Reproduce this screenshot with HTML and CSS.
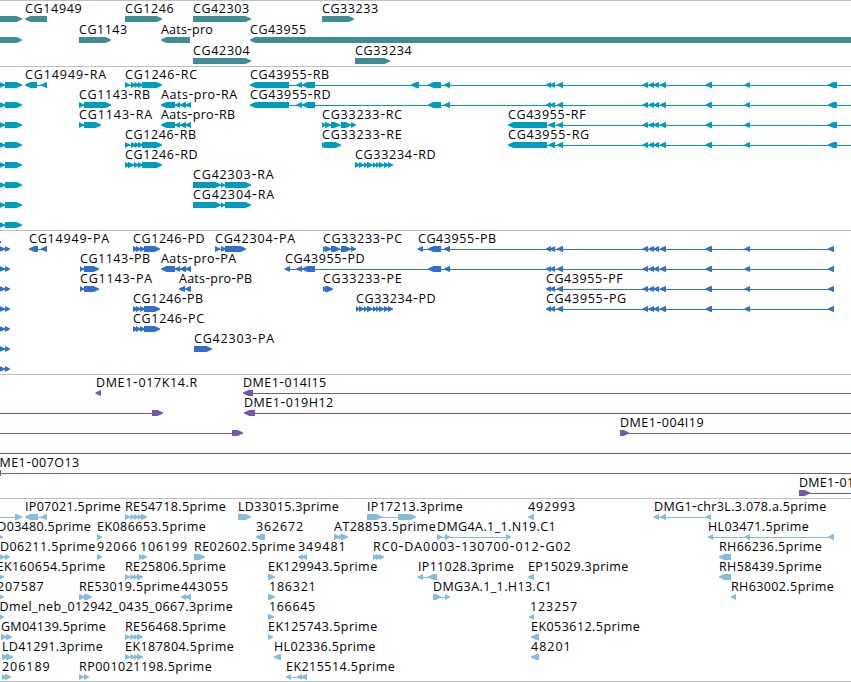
FILE: index.html
```html
<!DOCTYPE html>
<html lang="en">
<head>
<meta charset="utf-8">
<title>Genome tracks</title>
<link rel="stylesheet" href="styles.css">
</head>
<body>
<main class="browser">
<section class="track genes"></section>
<section class="track transcripts"></section>
<section class="track proteins"></section>
<section class="track clones"></section>
<section class="track ests"></section>
</main>
<script src="tracks.js"></script>
</body>
</html>
```
FILE: styles.css
```css
html,
body {
  margin: 0;
  background: #fff;
}

body {
  overflow: hidden;
}

.browser {
  display: flex;
  flex-direction: column;
  width: 851px;
  border-bottom: 1px solid #bebebe;
}

.track {
  border-top: 1px solid #bebebe;
}

.track svg {
  display: block;
  width: 851px;
}

.label {
  font-family: "Open Sans", "DejaVu Sans", sans-serif;
  font-size: 12.5px;
  fill: #000;
}

.dash {
  font-size: 15px;
}

.genes { color: #3f8c93; }
.transcripts { color: #009cbf; }
.proteins { color: #306fce; }
.clones { color: #7457a7; }
.ests { color: #87bbdc; }

.exon,
.intron {
  fill: currentColor;
}
```
FILE: tracks.js
```js
// Feature: [row, direction, "exon ranges", intron line or null, label, label start, label end]
const same = "546-551,550-555,557-563";
const tail = ",642.5-648,648.5-654,653.5-659,660-666,705.5-712,744.5-750";
const tTail = tail + ",828-837";
const pTail = tail + ",828-834";

const genes = [
  [0, ">", "-9-22"], [1, ">", "-9-22"],
  [0, "<", "25-47", null, "CG14949", 26, 81],
  [0, ">", "125-162", null, "CG1246", 126, 173],
  [0, ">", "193-251", null, "CG42303", 194, 248.5],
  [0, ">", "322-354", null, "CG33233", 323, 377.5],
  [1, ">", "79-111", null, "CG1143", 80, 126.5],
  [1, "<", "161-190", null, "Aats-pro", 162, 212],
  [1, "<", "250-870", null, "CG43955", 251, 305.5],
  [2, ">", "193-251", null, "CG42304", 194, 249],
  [2, ">", "355-390", null, "CG33234", 356, 411]
];

const transcripts = [
  [0, "<", "25-37,41-47", [30, 47], "CG14949-RA", 26, 105.5],
  [0, ">", "125-130,131-136,134.5-139.5,138-143,142-162", [125, 145], "CG1246-RC", 126, 196.5],
  [0, "<", "250-289,296.5-302,302-315,411-419,428-441,444-450," + same + tTail, [250, 851], "CG43955-RB", 251, 328.5],
  [1, ">", "79-84,84-111", [79, 90], "CG1143-RB", 80, 149.5],
  [1, "<", "161-175,175-180,180-186,185.5-191", [165, 190], "Aats-pro-RA", 162, 236.5],
  [1, "<", "250-289,296.5-302,302-315,428-441,444-450," + same + tTail, [250, 851], "CG43955-RD", 251, 330],
  [2, ">", "79-84,84-101", [79, 90], "CG1143-RA", 80, 151.5],
  [2, "<", "161-175,175-180,180-186,185.5-191", [165, 190], "Aats-pro-RB", 162, 234.5],
  [2, ">", "322-326,325-331,331-340,341-351,351-356", [322, 354], "CG33233-RC", 323, 401.5],
  [2, "<", "508-547,548.5-555,557-563" + tTail, [510, 851], "CG43955-RF", 509, 585],
  [3, ">", "125-130,131-136,134.5-139.5,138-143,142-162", [125, 145], "CG1246-RB", 126, 195.5],
  [3, ">", "322-326,324-341", null, "CG33233-RE", 323, 401],
  [3, "<", "508-547,548.5-555,557-563" + tTail, [510, 851], "CG43955-RG", 509, 588.5],
  [4, ">", "125-130,128-134,134-139,138-143,142-162", [125, 145], "CG1246-RD", 126, 197],
  [4, ">", "355-360,359-364,364-368,367-373,373-377,376-380,379-384,384-389,388-393", [355, 390], "CG33234-RD", 356, 435],
  [5, ">", "193-221,221-225,225-251", [200, 240], "CG42303-RA", 194, 273],
  [6, ">", "193-221,221-225,225-251", [200, 240], "CG42304-RA", 194, 273.5]
];
for (let r = 0; r < 8; r++) transcripts.push([r, ">", "-1-5,5-22", [0, 9]]);

const proteins = [
  [0, "<", "29-38,41-47", [30, 46], "CG14949-PA", 30, 108.5],
  [0, ">", "133-138,136-141,140-145,144-160", [133, 148], "CG1246-PD", 134, 204],
  [0, ">", "215-220,221-226,225-246", [215, 230], "CG42304-PA", 216, 294.5],
  [0, ">", "323-327,325-331,331-340,341-351,351-356", [323, 354], "CG33233-PC", 324, 401.5],
  [0, "<", "417.5-423,428-441,444-450," + same + pTail, [420, 833], "CG43955-PB", 419, 495.5],
  [1, ">", "80-84,84-99", [80, 90], "CG1143-PB", 81, 149.5],
  [1, "<", "161-175,175-180,180-186,185.5-191", [165, 190], "Aats-pro-PA", 162, 235.5],
  [1, "<", "284.5-290,296.5-302,302-315,428-441,444-450," + same + pTail, [287, 833], "CG43955-PD", 286, 364],
  [2, ">", "80-84,84-99", [80, 90], "CG1143-PA", 81, 151.5],
  [2, "<", "179-185,185-191", null, "Aats-pro-PB", 180, 251.5],
  [2, ">", "323-327,325-333", null, "CG33233-PE", 324, 401],
  [2, "<", same + pTail, [548, 833], "CG43955-PF", 547, 622],
  [3, ">", "133-138,136-141,140-145,144-160", [133, 148], "CG1246-PB", 134, 202.5],
  [3, ">", "356-360,359-364,364-368,367-373,373-377,376-380,379-384,384-389,388-393", [356, 390], "CG33234-PD", 357, 435],
  [3, "<", same + pTail, [548, 833], "CG43955-PG", 547, 625.5],
  [4, ">", "133-138,136-141,140-145,144-160", [133, 148], "CG1246-PC", 134, 203.5],
  [5, ">", "194-212", null, "CG42303-PA", 195, 273.5]
];
for (let r = 0; r < 7; r++) proteins.push([r, ">", "-1-5,5-10", [0, 7]]);
proteins.push([0, ">", "", null, ".", -0.5, 1]);

const clones = [
  [0, "<", "95.5-101", null, "DME1-017K14.R", 97, 196.5],
  [0, "<", "243-253", [250, 851], "DME1-014I15", 244, 325.5],
  [1, ">", "152-163", [0, 155]],
  [1, "<", "244-255", [250, 851], "DME1-019H12", 245, 332.5],
  [2, ">", "232-243", [0, 235]],
  [2, ">", "620-629", [622, 851], "DME1-004I19", 621, 703],
  [3, ">", "", [0, 851]],
  [4, "|", "0-1", [0, 851], "DME1-007O13", -9, 78.5],
  [5, ">", "799-810", [802, 851], "DME1-011B19", 800, 884]
];

const ests = [
  [0, ">", "15-22", [0, 18]],
  [0, "<", "25-38,41-47", [30, 46], "IP07021.5prime", 26, 120],
  [0, ">", "125-130,130.5-135,134-139,138-142,141-147", [125, 142], "RE54718.5prime", 126, 225],
  [0, ">", "238-251", null, "LD33015.3prime", 239, 338],
  [0, ">", "367-382,398-416", [370, 405], "IP17213.3prime", 368, 462],
  [0, "<", "528-534", null, "492993", 529, 574.5],
  [0, "<", "653.5-659,660-666,705.5-711", [656, 710], "DMG1-chr3L.3.078.a.5prime", 655, 825.5],
  [1, ">", "-2-3", null, "LD03480.5prime", -8.5, 90],
  [1, ">", "97-102", null, "EK086653.5prime", 98, 205],
  [1, "<", "256-265", null, "362672", 257, 302.5],
  [1, ">", "334-340,339-343,341-348", null, "AT28853.5prime", 335, 435],
  [1, ">", "437-442,445-450,506-511", [440, 509], "DMG4A.1_1.N19.C1", 438, 555],
  [1, "<", "708-713,744.5-750,828-834", [710, 832], "HL03471.5prime", 709, 808],
  [2, ">", "-1-5,5-10", [0, 8], "LD06211.5prime", -6, 94.5],
  [2, ">", "97-102", null, "92066", 98, 136],
  [2, ">", "139-144,142-147", null, "106199", 141, 186.5],
  [2, ">", "194-205", null, "RE02602.5prime", 195, 294.5],
  [2, "<", "298-303,302-307", null, "349481", 299, 345],
  [2, ">", "373-378,376-381,379-384", null, "RC0-DA0003-130700-012-G02", 374, 570],
  [2, "<", "719-731", null, "RH66236.5prime", 720, 821],
  [3, ">", "-1-4", null, "EK160654.5prime", -2.5, 104.5],
  [3, ">", "125-130,130.5-135,134-138,137-143", [125, 138], "RE25806.5prime", 126, 225],
  [3, ">", "268-275", null, "EK129943.5prime", 269, 376.5],
  [3, "<", "417.5-423,428-437", [420, 432], "IP11028.3prime", 419, 513],
  [3, "<", "528-534", null, "EP15029.3prime", 529, 627.5],
  [3, "<", "719-731", null, "RH58439.5prime", 720, 821],
  [4, ">", "-1-4", null, "207587", -2, 43],
  [4, ">", "79-85,84-92", null, "RE53019.5prime", 80, 179],
  [4, "<", "181-186,185-191", null, "443055", 182, 227.5],
  [4, ">", "268-275", null, "186321", 270, 315],
  [4, ">", "433-441,445-450", [435, 448], "DMG3A.1_1.H13.C1", 434, 551],
  [4, "<", "731-736", null, "RH63002.5prime", 732, 833],
  [5, ">", "-1-4", null, "Dmel_neb_012942_0435_0667.3prime", 0.5, 232],
  [5, ">", "268-274", null, "166645", 270, 314.5],
  [5, "<", "529-534", null, "123257", 531, 576.5],
  [6, ">", "1-7,6-12", null, "GM04139.5prime", 2, 105],
  [6, ">", "125-130,130.5-135,134-138,137-143", [125, 138], "RE56468.5prime", 126, 225],
  [6, ">", "268-273", null, "EK125743.5prime", 269, 376.5],
  [6, "<", "531-539", null, "EK053612.5prime", 532, 639],
  [7, ">", "2-8,6-13", null, "LD41291.3prime", 3, 102],
  [7, ">", "125-130,130.5-135,134-138,137-143", [125, 138], "EK187804.5prime", 126, 233],
  [7, "<", "274-281", null, "HL02336.5prime", 275, 374.5],
  [7, "<", "531-539", null, "48201", 532, 570],
  [8, ">", "2-7,5-11", null, "206189", 3, 49],
  [8, ">", "79-84,84-89", null, "RP001021198.5prime", 80, 211],
  [8, "<", "286-291,297-302,301-307", [288, 303], "EK215514.5prime", 287, 394]
];

const NS = "http://www.w3.org/2000/svg";

function add(parent, name, attrs) {
  const el = document.createElementNS(NS, name);
  for (const key in attrs) el.setAttribute(key, attrs[key]);
  parent.appendChild(el);
  return el;
}

function exonPoints(x0, x1, y, dir) {
  if (dir === "|") return `${x0},${y} ${x1},${y} ${x1},${y + 6} ${x0},${y + 6}`;
  const tip = Math.min(5.5, x1 - x0);
  const [back, end, s] = dir === ">" ? [x0, x1, 1] : [x1, x0, -1];
  const neck = end - s * tip;
  const mid = end - s * 2;
  return `${back},${y} ${neck},${y} ${mid},${y + 1.6} ${end},${y + 2.5} ${end},${y + 3.5} ${mid},${y + 4.6} ${neck},${y + 6} ${back},${y + 6}`;
}

// The hyphen is drawn larger so that it reads as a wide dash.
function writeLabel(svg, text, from, to, y) {
  const label = add(svg, "text", { class: "label", x: from - 1, y });
  if (text.length > 1) label.setAttribute("textLength", to - from + 1.7);
  if (!text.includes("-")) {
    label.textContent = text;
    return;
  }
  for (const part of text.split(/(-)/)) {
    if (!part) continue;
    const span = add(label, "tspan", part === "-" ? { class: "dash" } : {});
    span.textContent = part;
  }
}

function draw(name, features, height, pitch) {
  const svg = add(document.querySelector("." + name), "svg", { width: 851, height, viewBox: `0 0 851 ${height}` });
  for (const [row, dir, exons, line, text, from, to] of features) {
    const y = 15 + row * pitch;
    if (line) add(svg, "rect", { class: "intron", x: line[0], y: y + 3, width: line[1] - line[0], height: 1 });
    for (const range of exons ? exons.split(",") : []) {
      const [, a, b] = range.match(/^(-?[\d.]+)-([\d.]+)$/);
      add(svg, "polygon", { class: "exon", points: exonPoints(+a, +b, y, dir) });
    }
    if (text) writeLabel(svg, text, from, to, y - 3);
  }
}

draw("genes", genes, 65, 21);
draw("transcripts", transcripts, 163, 20);
draw("proteins", proteins, 143, 20);
draw("clones", clones, 123, 20);
draw("ests", ests, 182, 20);
```
